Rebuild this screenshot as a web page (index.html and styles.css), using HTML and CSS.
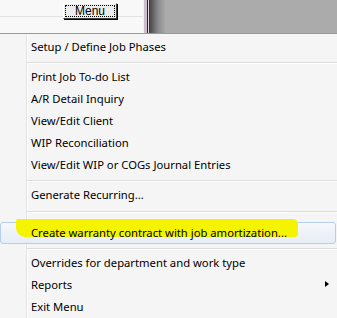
FILE: index.html
```html
<!DOCTYPE html>
<html lang="en">
<head>
    <meta charset="UTF-8">
    <meta name="viewport" content="width=device-width, initial-scale=1.0">
    <title>Job Menu</title>
    <link rel="stylesheet" href="styles.css">
</head>
<body>

    <header class="topbar">
        <div class="panel">
            <button class="menuknap"><span>Menu</span></button>
        </div>
        <div class="skille"></div>
        <div class="skygge"></div>
    </header>

    <nav class="menu">
        <div class="punkt">Setup / Define Job Phases</div>
        <div class="streg"></div>
        <div class="punkt">Print Job To-do List</div>
        <div class="punkt">A/R Detail Inquiry</div>
        <div class="punkt">View/Edit Client</div>
        <div class="punkt">WIP Reconciliation</div>
        <div class="punkt">View/Edit WIP or COGs Journal Entries</div>
        <div class="streg"></div>
        <div class="punkt">Generate Recurring...</div>
        <div class="streg bred"></div>
        <div class="punkt aktiv">
            <span class="overstreg"></span>
            <span class="tekst">Create warranty contract with job amortization...</span>
        </div>
        <div class="streg"></div>
        <div class="punkt">Overrides for department and work type</div>
        <div class="punkt undermenu">Reports</div>
        <div class="punkt">Exit Menu</div>
    </nav>

</body>
</html>
```

FILE: styles.css
```css
body {
    margin: 0;
    width: 337px;
    height: 318px;
    overflow: hidden;
    background-color: #f5f5f5;
    font-family: "Noto Sans", sans-serif;
    font-size: 11.25px;
    color: #000;
}

/* top part of the window behind the menu */
.topbar {
    display: flex;
    height: 33px;
    border-bottom: 1px solid #999999;
}

.panel {
    width: 143px;
    background: linear-gradient(to bottom, #f8f8f8 16px, #e2e2e2 16px, #e2e2e2 17px, #f8f8f8 17px);
}

.menuknap {
    display: block;
    margin: 3px 0 0 63px;
    width: 54px;
    height: 16px;
    padding: 1px;
    background-color: #ececec;
    border: 1px solid;
    border-color: #ffffff #404040 #404040 #ffffff;
    box-shadow: 1px 1px 0 #000;
    font-family: "Liberation Sans", sans-serif;
    font-size: 12px;
    line-height: 11px;
}

.menuknap span {
    display: block;
    height: 10px;
    border: 1px dotted #000;
}

.skille {
    width: 7px;
    background: linear-gradient(to right, #f0f0f0 1px, #cbbdcb 1px, #cbbdcb 4px, #2a2a2a 4px, #2a2a2a 5px, #e0e0e0 5px, #e0e0e0 6px, #3c3c3c 6px);
}

.skygge {
    flex: 1;
    background: linear-gradient(to right, #4a4a4a 0, #8a8a8a 8px, #ababab 16px, #ababab);
}

/* the drop down menu */
.menu {
    padding-top: 2px;
    height: 284px;
    background: linear-gradient(to right, #f5f5f5 26px, #e2e3e3 26px, #e2e3e3 27px, #ffffff 27px, #ffffff 28px, #f5f5f5 28px);
}

.punkt {
    position: relative;
    height: 22px;
    line-height: 22px;
    padding-left: 31px;
    white-space: nowrap;
}

.streg {
    height: 0;
    margin: 4px 0 2px 27px;
    border-top: 1px solid #dcdcdc;
    border-bottom: 1px solid #ffffff;
}

.streg.bred {
    margin-top: 5px;
    margin-bottom: 9px;
}

.aktiv {
    margin-right: 1px;
    padding-left: 30px;
    height: 20px;
    line-height: 20px;
    border: 1px solid #b4cfee;
    border-radius: 3px;
    background: linear-gradient(to bottom, #f6f8fb, #e6edf5);
}

.aktiv .tekst {
    position: relative;
}

/* yellow marker drawn over the item */
.overstreg {
    position: absolute;
    left: 15px;
    top: -4px;
    width: 282px;
    height: 18px;
    background-color: #f4f400;
    border-radius: 2px 5px 3px 9px;
}

.undermenu::after {
    content: "";
    position: absolute;
    left: 325px;
    top: 7px;
    border-left: 4px solid #000;
    border-top: 3.5px solid transparent;
    border-bottom: 3.5px solid transparent;
}
```
